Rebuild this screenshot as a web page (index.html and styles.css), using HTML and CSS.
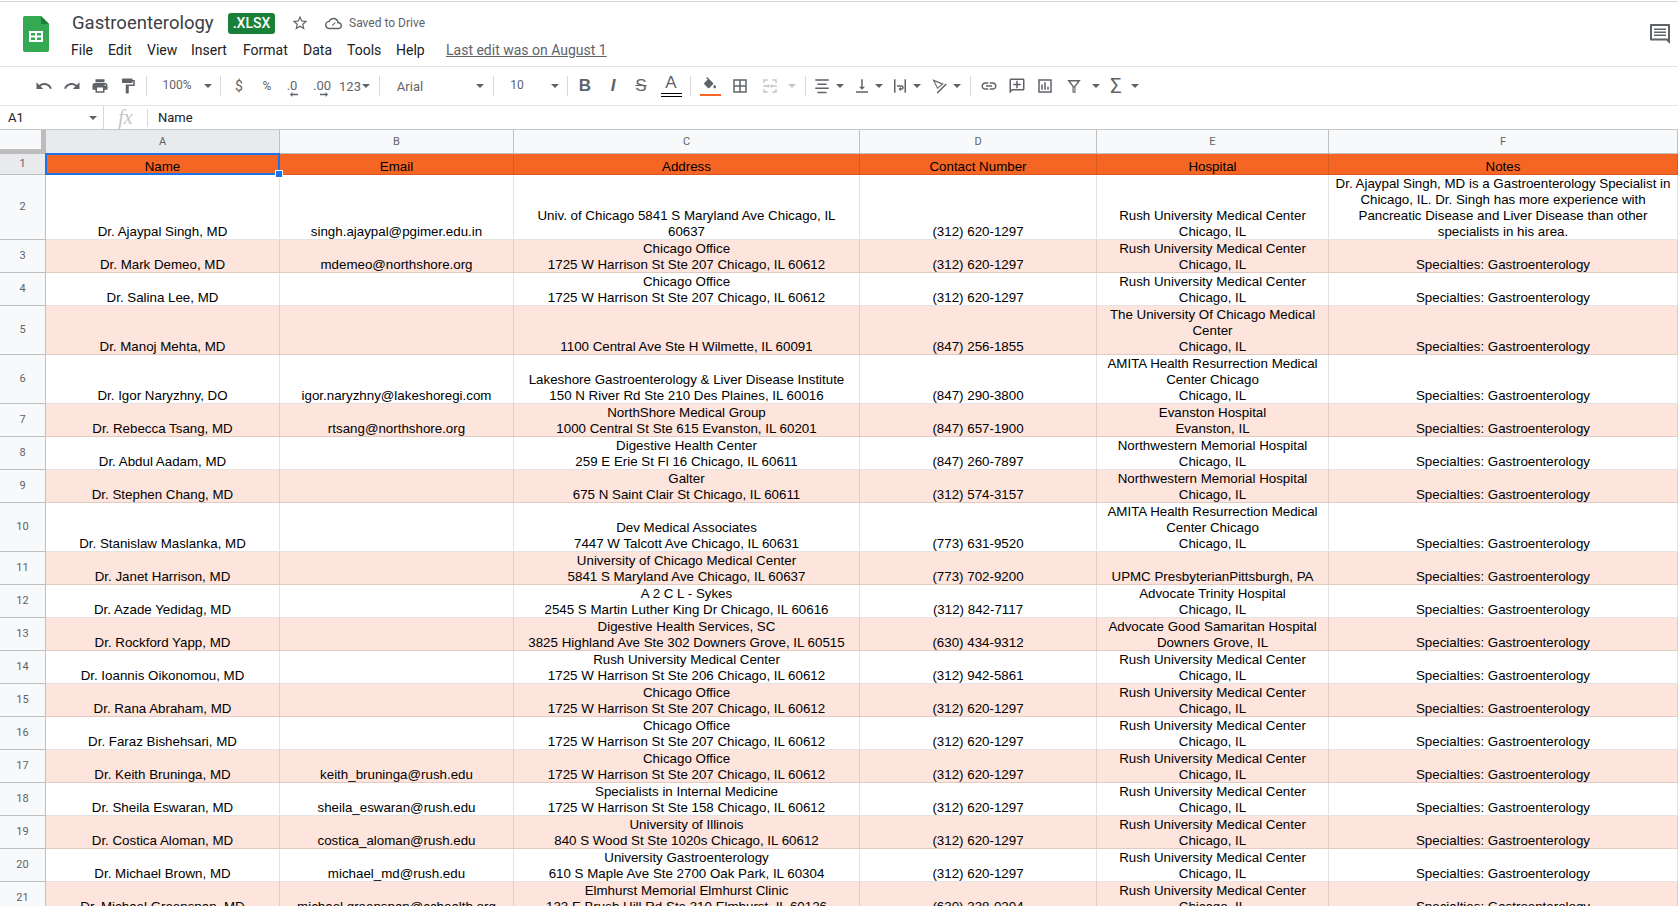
FILE: index.html
```html
<!DOCTYPE html>
<html lang="en">
<head>
<meta charset="utf-8">
<title>Gastroenterology</title>
<link rel="stylesheet" href="styles.css">
</head>
<body>
<header class="top">
  <svg class="logo" viewBox="0 0 26 36"><path fill="#34a853" d="M2 0h16l8 8v26a2 2 0 0 1-2 2H2a2 2 0 0 1-2-2V2a2 2 0 0 1 2-2z"/><path fill="#188038" d="M18 0l8 8h-8z"/><path fill="#fff" d="M6 15h14v11H6z"/><path fill="#34a853" d="M8 17h4v2.500H8zM14 17h4v2.500h-4zM8 21.500h4V24H8zM14 21.500h4V24h-4z"/></svg>
  <div class="titles">
    <div class="title-row">
      <span class="doc-name">Gastroenterology</span>
      <span class="badge">.XLSX</span>
      <svg class="star" viewBox="0 0 24 24"><path d="M22 9.240l-7.190-.62L12 2 9.190 8.630 2 9.240l5.460 4.730L5.820 21 12 17.270 18.180 21l-1.630-7.030L22 9.240zM12 15.400l-3.760 2.270 1-4.280-3.320-2.880 4.380-.38L12 6.100l1.710 4.040 4.380.38-3.320 2.880 1 4.280L12 15.400z"/></svg>
      <svg class="cloud" viewBox="0 0 24 24"><path d="M19.350 10.040C18.670 6.590 15.640 4 12 4 9.110 4 6.600 5.640 5.350 8.040 2.340 8.360 0 10.910 0 14c0 3.310 2.690 6 6 6h13c2.760 0 5-2.240 5-5 0-2.640-2.050-4.780-4.650-4.960zM19 18H6c-2.210 0-4-1.790-4-4s1.790-4 4-4h.71C7.370 7.690 9.480 6 12 6c3.040 0 5.500 2.460 5.500 5.500v.5H19c1.660 0 3 1.340 3 3s-1.340 3-3 3z"/><path d="M9.500 14.500l1.200 1.200 4.300-4.300-1.200-1.200-3.100 3.100z"/></svg>
      <span class="saved">Saved to Drive</span>
    </div>
    <nav class="menu">
      <span class="m-file">File</span><span class="m-edit">Edit</span><span class="m-view">View</span><span class="m-insert">Insert</span><span class="m-format">Format</span><span class="m-data">Data</span><span class="m-tools">Tools</span><span class="m-help">Help</span><a class="last-edit">Last edit was on August 1</a>
    </nav>
  </div>
  <svg class="history" viewBox="0 0 20 20"><path fill-rule="evenodd" d="M1 0h18a1 1 0 0 1 1 1v19l-3.500-3.500H1a1 1 0 0 1-1-1V1a1 1 0 0 1 1-1zm1 2v12.500h15.500l.5.500V2z"/><path d="M4 4.500h12V6H4zM4 7.500h12V9H4zM4 10.500h12V12H4z"/></svg>
</header>

<div class="toolbar">
  <span class="tb w-first"></span>
  <span class="tb"><svg class="ic" viewBox="0 0 24 24"><path d="M12.500 8c-2.650 0-5.050.99-6.900 2.600L2 7v9h9l-3.620-3.620c1.390-1.160 3.160-1.880 5.120-1.880 3.540 0 6.550 2.310 7.600 5.500l2.370-.78C21.080 11.030 17.150 8 12.500 8z"/></svg></span>
  <span class="tb"><svg class="ic" viewBox="0 0 24 24"><path d="M18.400 10.600C16.550 8.990 14.150 8 11.500 8c-4.650 0-8.580 3.030-9.960 7.220L3.900 16c1.050-3.190 4.050-5.500 7.600-5.500 1.950 0 3.730.72 5.120 1.880L13 16h9V7l-3.600 3.600z"/></svg></span>
  <span class="tb"><svg class="ic" viewBox="0 0 24 24"><path d="M19 8H5c-1.660 0-3 1.340-3 3v6h4v4h12v-4h4v-6c0-1.660-1.340-3-3-3zm-3 11H8v-5h8v5zm3-7c-.55 0-1-.45-1-1s.45-1 1-1 1 .45 1 1-.45 1-1 1zm-1-9H6v4h12V3z"/></svg></span>
  <span class="tb"><svg class="ic" viewBox="0 0 24 24"><path d="M18 4V3c0-.55-.45-1-1-1H5c-.55 0-1 .45-1 1v4c0 .55.45 1 1 1h12c.55 0 1-.45 1-1V6h1v4H9v11c0 .55.45 1 1 1h2c.55 0 1-.45 1-1v-9h8V4h-3z"/></svg></span>
  <span class="sep sep-a"></span>
  <span class="tb w-zoom">100%</span><span class="caret c-zoom"></span>
  <span class="sep sep-b"></span>
  <span class="tb w-dollar">$</span>
  <span class="tb w-pct">%</span>
  <span class="tb w-dec dec"><span>.0</span><svg class="arrow" viewBox="0 0 10 6"><path d="M0 3l3-3v2h7v2H3v2z"/></svg></span>
  <span class="tb w-inc dec"><span>.00</span><svg class="arrow" viewBox="0 0 10 6"><path d="M10 3L7 0v2H0v2h7v2z"/></svg></span>
  <span class="tb w-123">123</span><span class="caret c-123"></span>
  <span class="sep sep-c"></span>
  <span class="tb w-font">Arial</span><span class="caret c-font"></span>
  <span class="sep sep-d"></span>
  <span class="tb w-size">10</span><span class="caret c-size"></span>
  <span class="sep sep-e"></span>
  <span class="tb w-b letter bold">B</span>
  <span class="tb letter ital">I</span>
  <span class="tb letter strike">S</span>
  <span class="tb letter color w-a">A<i class="bar bar-black"></i></span>
  <span class="sep sep-f"></span>
  <span class="tb w-fill w-paint color"><svg class="ic ic-fill" viewBox="0 0 24 24"><path d="M16.560 8.940L7.620 0 6.210 1.410l2.380 2.380-5.150 5.150c-.59.59-.59 1.540 0 2.120l5.500 5.500c.29.29.68.44 1.060.44s.77-.15 1.060-.44l5.500-5.500c.59-.58.59-1.530 0-2.120zM19 11.500s-2 2.170-2 3.500c0 1.100.9 2 2 2s2-.9 2-2c0-1.330-2-3.500-2-3.500z"/></svg><i class="bar bar-orange"></i></span>
  <span class="tb w-fill"><svg class="ic" viewBox="0 0 24 24"><path d="M3 3v18h18V3H3zm8 16H5v-6h6v6zm0-8H5V5h6v6zm8 8h-6v-6h6v6zm0-8h-6V5h6v6z"/></svg></span>
  <span class="tb w-merge"><svg class="ic off" viewBox="0 0 24 24"><path d="M3 3h6v2H5v3H3zM15 3h6v5h-2V5h-4zM3 16h2v3h4v2H3zM19 16h2v5h-6v-2h4zM3 11h6V9l3 3-3 3v-2H3zM21 11h-6V9l-3 3 3 3v-2h6z"/></svg></span><span class="caret c-merge off-caret"></span>
  <span class="sep sep-g"></span>
  <span class="tb w-align"><svg class="ic" viewBox="0 0 24 24"><path d="M3 3h18v2H3zM6 8.500h12v2H6zM3 14h18v2H3zM6 19.500h12v2H6z"/></svg></span><span class="caret c-first"></span>
  <span class="tb w-v w-valign"><svg class="ic" viewBox="0 0 24 24"><path d="M16 13h-3V3h-2v10H8l4 4 4-4zM4 19v2h16v-2H4z"/></svg></span><span class="caret c-i"></span>
  <span class="tb w-v w-wrap"><svg class="ic" viewBox="0 0 24 24"><path d="M4 3h2v18H4zM18 3h2v18h-2zM8 11h6a3 3 0 0 1 0 6h-1v2l-3-3 3-3v2h1a1 1 0 0 0 0-2H8z"/></svg></span><span class="caret c-i"></span>
  <span class="tb w-v w-rot"><svg class="ic" viewBox="0 0 24 24"><path d="M2 3l15 6-8.500 7zM5 6l4 8 5-4.500z" fill-rule="evenodd"/><path d="M19.600 8.600l1.400 1.400L9 22l-1.400-1.400z"/></svg></span><span class="caret c-i"></span>
  <span class="sep sep-h"></span>
  <span class="tb w-link"><svg class="ic" viewBox="0 0 24 24"><path d="M3.900 12c0-1.710 1.390-3.100 3.100-3.100h4V7H7c-2.760 0-5 2.240-5 5s2.240 5 5 5h4v-1.900H7c-1.710 0-3.100-1.390-3.100-3.100zM8 13h8v-2H8v2zm9-6h-4v1.900h4c1.710 0 3.100 1.390 3.100 3.100s-1.390 3.100-3.100 3.100h-4V17h4c2.760 0 5-2.240 5-5s-2.240-5-5-5z"/></svg></span>
  <span class="tb"><svg class="ic" viewBox="0 0 24 24"><path fill-rule="evenodd" d="M20 2H4c-1.100 0-2 .9-2 2v18l4-4h14c1.100 0 2-.9 2-2V4c0-1.100-.9-2-2-2zm0 14H5.170L4 17.170V4h16v12z"/><path d="M11 5h2v4h4v2h-4v4h-2v-4H7V9h4z"/></svg></span>
  <span class="tb"><svg class="ic" viewBox="0 0 24 24"><path fill-rule="evenodd" d="M3 3v18h18V3H3zm16 16H5V5h14v14z"/><path d="M7 10h2v7H7zM11 7h2v10h-2zM15 13h2v4h-2z"/></svg></span>
  <span class="tb w-filter"><svg class="ic" viewBox="0 0 24 24"><path fill-rule="evenodd" d="M3 4h18l-7 9v8h-4v-8zM7 6l5 6.500L17 6zM11.500 14v5.500h1V14z"/></svg></span><span class="caret c-filter"></span>
  <span class="tb w-sigma">Σ</span><span class="caret c-i"></span>
</div>

<div class="formula">
  <span class="namebox">A1</span><span class="caret c-name"></span>
  <span class="sep fsep-a"></span>
  <span class="fx">fx</span>
  <span class="sep fsep-b"></span>
  <span class="fvalue">Name</span>
</div>

<table class="sheet">
  <colgroup><col class="c0"><col class="ca"><col class="cb"><col class="cc"><col class="cd"><col class="ce"><col class="cf"></colgroup>
  <thead>
    <tr class="colhead"><th class="corner"></th><th class="active">A</th><th>B</th><th>C</th><th>D</th><th>E</th><th>F</th></tr>
  </thead>
  <tbody>
    <tr class="h21 headrow"><th class="active">1</th><td class="sel">Name<span class="selbox"><i class="handle"></i></span></td><td>Email</td><td>Address</td><td>Contact Number</td><td>Hospital</td><td>Notes</td></tr>
    <tr class="h65"><th>2</th><td>Dr. Ajaypal Singh, MD</td><td>singh.ajaypal@pgimer.edu.in</td><td>Univ. of Chicago 5841 S Maryland Ave Chicago, IL 60637</td><td>(312) 620-1297</td><td>Rush University Medical Center<br>Chicago, IL</td><td>Dr. Ajaypal Singh, MD is a Gastroenterology Specialist in Chicago, IL. Dr. Singh has more experience with Pancreatic Disease and Liver Disease than other specialists in his area.</td></tr>
    <tr class="h33 pink"><th>3</th><td>Dr. Mark Demeo, MD</td><td>mdemeo@northshore.org</td><td>Chicago Office<br>1725 W Harrison St Ste 207 Chicago, IL 60612</td><td>(312) 620-1297</td><td>Rush University Medical Center<br>Chicago, IL</td><td>Specialties: Gastroenterology</td></tr>
    <tr class="h33"><th>4</th><td>Dr. Salina Lee, MD</td><td></td><td>Chicago Office<br>1725 W Harrison St Ste 207 Chicago, IL 60612</td><td>(312) 620-1297</td><td>Rush University Medical Center<br>Chicago, IL</td><td>Specialties: Gastroenterology</td></tr>
    <tr class="h49 pink"><th>5</th><td>Dr. Manoj Mehta, MD</td><td></td><td>1100 Central Ave Ste H Wilmette, IL 60091</td><td>(847) 256-1855</td><td>The University Of Chicago Medical Center<br>Chicago, IL</td><td>Specialties: Gastroenterology</td></tr>
    <tr class="h49"><th>6</th><td>Dr. Igor Naryzhny, DO</td><td>igor.naryzhny@lakeshoregi.com</td><td>Lakeshore Gastroenterology &amp; Liver Disease Institute<br>150 N River Rd Ste 210 Des Plaines, IL 60016</td><td>(847) 290-3800</td><td>AMITA Health Resurrection Medical Center Chicago<br>Chicago, IL</td><td>Specialties: Gastroenterology</td></tr>
    <tr class="h33 pink"><th>7</th><td>Dr. Rebecca Tsang, MD</td><td>rtsang@northshore.org</td><td>NorthShore Medical Group<br>1000 Central St Ste 615 Evanston, IL 60201</td><td>(847) 657-1900</td><td>Evanston Hospital<br>Evanston, IL</td><td>Specialties: Gastroenterology</td></tr>
    <tr class="h33"><th>8</th><td>Dr. Abdul Aadam, MD</td><td></td><td>Digestive Health Center<br>259 E Erie St Fl 16 Chicago, IL 60611</td><td>(847) 260-7897</td><td>Northwestern Memorial Hospital<br>Chicago, IL</td><td>Specialties: Gastroenterology</td></tr>
    <tr class="h33 pink"><th>9</th><td>Dr. Stephen Chang, MD</td><td></td><td>Galter<br>675 N Saint Clair St Chicago, IL 60611</td><td>(312) 574-3157</td><td>Northwestern Memorial Hospital<br>Chicago, IL</td><td>Specialties: Gastroenterology</td></tr>
    <tr class="h49"><th>10</th><td>Dr. Stanislaw Maslanka, MD</td><td></td><td>Dev Medical Associates<br>7447 W Talcott Ave Chicago, IL 60631</td><td>(773) 631-9520</td><td>AMITA Health Resurrection Medical Center Chicago<br>Chicago, IL</td><td>Specialties: Gastroenterology</td></tr>
    <tr class="h33 pink"><th>11</th><td>Dr. Janet Harrison, MD</td><td></td><td>University of Chicago Medical Center<br>5841 S Maryland Ave Chicago, IL 60637</td><td>(773) 702-9200</td><td>UPMC PresbyterianPittsburgh, PA</td><td>Specialties: Gastroenterology</td></tr>
    <tr class="h33"><th>12</th><td>Dr. Azade Yedidag, MD</td><td></td><td>A 2 C L - Sykes<br>2545 S Martin Luther King Dr Chicago, IL 60616</td><td>(312) 842-7117</td><td>Advocate Trinity Hospital<br>Chicago, IL</td><td>Specialties: Gastroenterology</td></tr>
    <tr class="h33 pink"><th>13</th><td>Dr. Rockford Yapp, MD</td><td></td><td>Digestive Health Services, SC<br>3825 Highland Ave Ste 302 Downers Grove, IL 60515</td><td>(630) 434-9312</td><td>Advocate Good Samaritan Hospital<br>Downers Grove, IL</td><td>Specialties: Gastroenterology</td></tr>
    <tr class="h33"><th>14</th><td>Dr. Ioannis Oikonomou, MD</td><td></td><td>Rush University Medical Center<br>1725 W Harrison St Ste 206 Chicago, IL 60612</td><td>(312) 942-5861</td><td>Rush University Medical Center<br>Chicago, IL</td><td>Specialties: Gastroenterology</td></tr>
    <tr class="h33 pink"><th>15</th><td>Dr. Rana Abraham, MD</td><td></td><td>Chicago Office<br>1725 W Harrison St Ste 207 Chicago, IL 60612</td><td>(312) 620-1297</td><td>Rush University Medical Center<br>Chicago, IL</td><td>Specialties: Gastroenterology</td></tr>
    <tr class="h33"><th>16</th><td>Dr. Faraz Bishehsari, MD</td><td></td><td>Chicago Office<br>1725 W Harrison St Ste 207 Chicago, IL 60612</td><td>(312) 620-1297</td><td>Rush University Medical Center<br>Chicago, IL</td><td>Specialties: Gastroenterology</td></tr>
    <tr class="h33 pink"><th>17</th><td>Dr. Keith Bruninga, MD</td><td>keith_bruninga@rush.edu</td><td>Chicago Office<br>1725 W Harrison St Ste 207 Chicago, IL 60612</td><td>(312) 620-1297</td><td>Rush University Medical Center<br>Chicago, IL</td><td>Specialties: Gastroenterology</td></tr>
    <tr class="h33"><th>18</th><td>Dr. Sheila Eswaran, MD</td><td>sheila_eswaran@rush.edu</td><td>Specialists in Internal Medicine<br>1725 W Harrison St Ste 158 Chicago, IL 60612</td><td>(312) 620-1297</td><td>Rush University Medical Center<br>Chicago, IL</td><td>Specialties: Gastroenterology</td></tr>
    <tr class="h33 pink"><th>19</th><td>Dr. Costica Aloman, MD</td><td>costica_aloman@rush.edu</td><td>University of Illinois<br>840 S Wood St Ste 1020s Chicago, IL 60612</td><td>(312) 620-1297</td><td>Rush University Medical Center<br>Chicago, IL</td><td>Specialties: Gastroenterology</td></tr>
    <tr class="h33"><th>20</th><td>Dr. Michael Brown, MD</td><td>michael_md@rush.edu</td><td>University Gastroenterology<br>610 S Maple Ave Ste 2700 Oak Park, IL 60304</td><td>(312) 620-1297</td><td>Rush University Medical Center<br>Chicago, IL</td><td>Specialties: Gastroenterology</td></tr>
    <tr class="h33 pink"><th>21</th><td>Dr. Michael Greenspan, MD</td><td>michael.greenspan@cchealth.org</td><td>Elmhurst Memorial Elmhurst Clinic<br>133 E Brush Hill Rd Ste 310 Elmhurst, IL 60126</td><td>(630) 338-0204</td><td>Rush University Medical Center<br>Chicago, IL</td><td>Specialties: Gastroenterology</td></tr>
  </tbody>
</table>
</body>
</html>
```

FILE: styles.css
```css
* { box-sizing: border-box; }
html, body { margin: 0; height: 906px; overflow: hidden; background: #fff; }
body { font-family: Roboto, "Liberation Sans", sans-serif; color: #202124; }

.top { height: 66px; border-top: 1px solid #d6d6d6; margin-top: 1px; border-bottom: 1px solid #e2e3e4; display: flex; align-items: flex-start; position: relative; }
.logo { width: 26px; height: 36px; margin: 14px 23px 0 23px; flex: none; }
.titles { display: flex; flex-direction: column; flex: 1; }
.title-row { display: flex; align-items: center; height: 22px; margin-top: 10px; }
.doc-name { font-size: 18.500px; color: #3c4043; width: 156px; }
.badge { width: 47px; height: 21px; border-radius: 3px; background: #188038; color: #fff; font-size: 14px; font-weight: 500; display: flex; align-items: center; justify-content: center; }
.star { width: 18px; height: 18px; fill: #5f6368; margin-left: 16px; }
.cloud { width: 17px; height: 17px; fill: #5f6368; margin-left: 16px; }
.saved { font-size: 12px; color: #5f6368; margin-left: 7px; }
.menu { display: flex; align-items: center; height: 20px; margin-top: 6px; font-size: 14px; color: #202124; }
.m-file { width: 37px; margin-left: -1px; }
.m-edit { width: 39px; }
.m-view { width: 44px; }
.m-insert { width: 52px; }
.m-format { width: 60px; }
.m-data { width: 44px; }
.m-tools { width: 49px; }
.m-help { width: 50px; }
.last-edit { color: #5f6368; text-decoration: underline; }
.history { position: absolute; left: 1650px; top: 22px; width: 20px; height: 20px; fill: #5f6368; }

.toolbar { height: 39px; border-bottom: 1px solid #e2e3e4; display: flex; align-items: center; font-size: 13px; color: #5f6368; }
.tb { width: 28px; height: 24px; display: flex; align-items: center; justify-content: center; flex: none; position: relative; }
.w-first { width: 30px; }
.ic { width: 18px; height: 18px; fill: #5f6368; display: block; }
.off { fill: #c4c7c5; }
.sep { width: 1px; height: 20px; background: #d7d8d9; flex: none; }
.sep-a { margin-left: 4px; }
.caret { width: 0; height: 0; border-left: 4px solid transparent; border-right: 4px solid transparent; border-top: 4px solid #5f6368; flex: none; }
.w-zoom { width: 30px; margin-left: 15px; font-size: 12px; padding-bottom: 2px; }
.c-zoom { margin-left: 12px; }
.sep-b { margin-left: 8px; }
.w-dollar { width: 36px; font-size: 14px; }
.w-pct { width: 20px; font-size: 12px; }
.dec { flex-direction: column; line-height: 13px; padding-top: 4px; }
.w-dec { width: 30px; }
.w-inc { width: 30px; }
.arrow { width: 8px; height: 5px; fill: #5f6368; display: block; margin: 0 0 0 3px; }
.w-123 { width: 20px; margin-left: 3px; font-size: 13px; }
.c-123 { margin-left: 2px; }
.sep-c { margin-left: 9px; }
.w-font { width: 26px; margin-left: 17px; }
.c-font { margin-left: 53px; }
.sep-d { margin-left: 9px; }
.w-size { width: 14px; margin-left: 16px; font-size: 12px; padding-bottom: 2px; }
.c-size { margin-left: 27px; }
.sep-e { margin-left: 8px; }
.w-b { margin-left: 3px; }
.letter { font-family: "Liberation Sans", sans-serif; font-size: 17px; }
.bold { font-weight: 700; }
.ital { font-style: italic; font-weight: 700; }
.strike { text-decoration: line-through; font-weight: 400; }
.w-a { margin-left: 2px; }
.color { flex-direction: column; }
.color.letter { font-weight: 400; line-height: 16px; }
.bar { display: block; width: 21px; }
.bar-black { height: 4px; border-bottom: 1px solid #000; border-top: 1px solid #000; margin-top: 2px; }
.bar-orange { background: #f56524; margin-top: 1px; height: 2px; }
.ic-fill { width: 16px; height: 16px; }
.sep-f { margin-left: 5px; }
.w-fill { width: 30px; }
.w-paint { margin-left: 4px; }
.w-merge { width: 30px; }
.c-merge { margin-left: 3px; }
.off-caret { border-top-color: #c4c7c5; }
.sep-g { margin-left: 9px; }
.w-align { width: 28px; margin-left: 2px; }
.c-first { margin-left: 0; }
.c-i { margin-left: 1px; }
.w-v { width: 24px; }
.w-valign { margin-left: 6px; }
.w-wrap { margin-left: 5px; }
.w-rot { margin-left: 7px; }
.sep-h { margin-left: 9px; }
.w-link { margin-left: 4px; }
.w-filter { width: 30px; }
.c-filter { margin-left: 3px; }
.w-sigma { width: 28px; margin-left: 2px; font-size: 20px; }

.formula { height: 24px; display: flex; align-items: center; font-size: 13px; border-bottom: 1px solid #c7c8c9; }
.namebox { width: 89px; padding-left: 8px; color: #202124; }
.c-name { margin-left: 0; }
.fsep-a { margin-left: 6px; height: 23px; }
.fx { width: 43px; text-align: center; font-family: "Liberation Serif", serif; font-style: italic; font-size: 20px; color: #c4c7c5; }
.fsep-b { height: 18px; }
.fvalue { margin-left: 10px; color: #202124; }

.sheet { table-layout: fixed; border-collapse: separate; border-spacing: 0; width: 1678px; font-family: "Liberation Sans", sans-serif; font-size: 13.330px; color: #000; }
.c0 { width: 46px; }
.ca { width: 234px; }
.cb { width: 234px; }
.cc { width: 346px; }
.cd { width: 237px; }
.ce { width: 232px; }
.cf { width: 349px; }

.colhead th { height: 24px; background: #f8f9fa; font-weight: 400; font-size: 11px; color: #5f6368; border-right: 1px solid #c0c0c0; border-bottom: 1px solid #c0c0c0; padding: 0; font-family: Roboto, sans-serif; }
.colhead th.corner { background: #f8f9fa; border-right: 5px solid #bdbdbd; border-bottom: 5px solid #bdbdbd; }
.colhead th.active, tbody th.active { background: #e8eaed; }

tbody th { background: #f8f9fa; font-weight: 400; font-size: 11px; color: #5f6368; border-right: 1px solid #c0c0c0; border-bottom: 1px solid #c0c0c0; padding: 0 0 2px; font-family: Roboto, sans-serif; vertical-align: middle; }
tbody td { text-align: center; vertical-align: bottom; padding: 0 5px 0 4px; line-height: 16px; box-shadow: inset -1px -1px 0 rgba(0,0,0,.11); overflow: hidden; }
.h21 { height: 21px; }
.h65 { height: 65px; }
.h33 { height: 33px; }
.h49 { height: 49px; }
.pink td { background: #fde4dc; }
.headrow td { background: #f56524; line-height: 17px; }
td.sel { position: relative; overflow: visible; }
.selbox { position: absolute; left: -1px; top: -1px; right: 0; bottom: 0; border: 2px solid #1a73e8; }
.handle { position: absolute; right: -5px; bottom: -5px; width: 8px; height: 8px; background: #1a73e8; border: 1px solid #fff; }
```
